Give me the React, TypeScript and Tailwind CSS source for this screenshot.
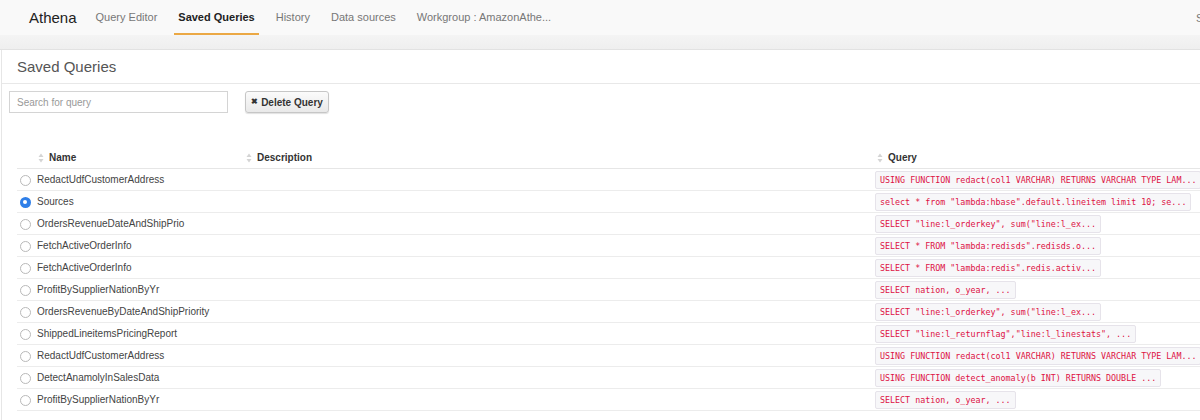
const NAV = ["Query Editor", "Saved Queries", "History", "Data sources", "Workgroup : AmazonAthe..."];

const ROWS: [string, string][] = [
  ["RedactUdfCustomerAddress", "USING FUNCTION redact(col1 VARCHAR) RETURNS VARCHAR TYPE LAM..."],
  ["Sources", 'select * from "lambda:hbase".default.lineitem limit 10; se...'],
  ["OrdersRevenueDateAndShipPrio", 'SELECT "line:l_orderkey", sum("line:l_ex...'],
  ["FetchActiveOrderInfo", 'SELECT * FROM "lambda:redisds".redisds.o...'],
  ["FetchActiveOrderInfo", 'SELECT * FROM "lambda:redis".redis.activ...'],
  ["ProfitBySupplierNationByYr", "SELECT nation, o_year, ..."],
  ["OrdersRevenueByDateAndShipPriority", 'SELECT "line:l_orderkey", sum("line:l_ex...'],
  ["ShippedLineitemsPricingReport", 'SELECT "line:l_returnflag","line:l_linestats", ...'],
  ["RedactUdfCustomerAddress", "USING FUNCTION redact(col1 VARCHAR) RETURNS VARCHAR TYPE LAM..."],
  ["DetectAnamolyInSalesData", "USING FUNCTION detect_anomaly(b INT) RETURNS DOUBLE ..."],
  ["ProfitBySupplierNationByYr", "SELECT nation, o_year, ..."],
];

function SortIcon() {
  return (
    <svg width="6" height="10" viewBox="0 0 6 10" className="shrink-0">
      <path d="M3 0.5 L5.5 4 L0.5 4 Z" fill="#d4d4d4" />
      <path d="M3 9.5 L5.5 6 L0.5 6 Z" fill="#d4d4d4" />
    </svg>
  );
}

function Radio({ on }: { on?: boolean }) {
  if (on)
    return (
      <span className="flex h-[11px] w-[11px] items-center justify-center rounded-full bg-[#2f7fe8]">
        <span className="h-[4px] w-[4px] rounded-full bg-white" />
      </span>
    );
  return <span className="h-[11px] w-[11px] rounded-full border border-[#b9b9b9] bg-white" />;
}

export default function App() {
  return (
    <div className="h-[420px] w-[1200px] overflow-hidden bg-white font-['Liberation_Sans',Arial,sans-serif] text-[#333]">
      <div className="flex h-[35px] items-center bg-[#f9f9f9] pl-[29px]">
        <span className="pt-[2px] text-[15px] text-[#222]">Athena</span>
        <div className="ml-[15px] flex h-full items-stretch gap-[13px]">
          {NAV.map((n, i) => (
            <div
              key={n}
              className={`flex items-center border-b-2 px-[4px] pt-[2px] text-[11px] ${
                i === 1 ? "border-[#eba844] font-bold text-[#222]" : "border-transparent text-[#777]"
              }`}
            >
              {n}
            </div>
          ))}
        </div>
        <span className="ml-auto mr-[-40px] w-[44px] pt-[2px] text-[11px] text-[#777]">Sign out</span>
      </div>
      <div className="h-[15px] border-b border-[#e2e2e2] bg-gradient-to-b from-[#f4f4f4] to-[#efefef]" />

      <div className="ml-[1px] h-full border-l border-[#e6e6e6]">
        <div className="flex h-[34px] items-center border-b border-[#e8e8e8] pl-[15px] pt-[2px] text-[15px] text-[#555]">
          Saved Queries
        </div>

        <div className="mt-[7px] flex items-center pl-[7px]">
          <input
            placeholder="Search for query"
            className="h-[22px] w-[219px] border border-[#d4d4d4] px-[7px] text-[10px] text-[#333] placeholder:text-[#999] focus:outline-none"
          />
          <button className="ml-[17px] flex h-[22px] w-[84px] items-center justify-center gap-[3px] rounded-[3px] border border-[#c6c6c6] bg-gradient-to-b from-[#fbfbfb] to-[#e9e9e9] text-[10px] font-bold text-[#333] shadow-[0_1px_1px_rgba(0,0,0,0.12)]">
            <span className="text-[8px]">✖</span>
            Delete Query
          </button>
        </div>

        <div className="ml-[15px] mt-[34px]">
          <div className="flex h-[22px] items-center border-b border-[#e6e6e6] text-[10px] font-bold text-[#333]">
            <div className="w-[20px] shrink-0" />
            <div className="flex w-[209px] shrink-0 items-center gap-[5px] pl-[1px]">
              <SortIcon />
              Name
            </div>
            <div className="flex w-[630px] shrink-0 items-center gap-[5px]">
              <SortIcon />
              Description
            </div>
            <div className="flex items-center gap-[5px] pl-[1px]">
              <SortIcon />
              Query
            </div>
          </div>
          {ROWS.map(([name, q], i) => (
            <div key={i} className="flex h-[22px] items-center border-b border-[#ececec] text-[10px] text-[#444]">
              <div className="flex w-[20px] shrink-0 justify-center pr-[4px] pt-[1px]">
                <Radio on={i === 1} />
              </div>
              <div className="w-[209px] shrink-0 whitespace-nowrap">{name}</div>
              <div className="w-[629px] shrink-0" />
              <code className="shrink-0 whitespace-nowrap rounded-[2px] border border-[#e6e3ea] bg-[#f7f7f9] px-[4px] py-[2px] font-['DejaVu_Sans_Mono',monospace] text-[8.35px] leading-[12px] text-[#dd1144]">
                {q}
              </code>
            </div>
          ))}
        </div>
      </div>
    </div>
  );
}
